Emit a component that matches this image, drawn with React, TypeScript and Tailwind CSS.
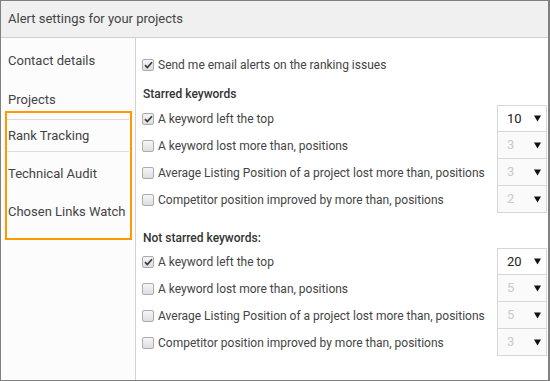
import React from "react";

type Rule = {
  label: string;
  checked: boolean;
  value: string;
};

const starred: Rule[] = [
  { label: "A keyword left the top", checked: true, value: "10" },
  { label: "A keyword lost more than, positions", checked: false, value: "3" },
  { label: "Average Listing Position of a project lost more than, positions", checked: false, value: "3" },
  { label: "Competitor position improved by more than, positions", checked: false, value: "2" }
];

const notStarred: Rule[] = [
  { label: "A keyword left the top", checked: true, value: "20" },
  { label: "A keyword lost more than, positions", checked: false, value: "5" },
  { label: "Average Listing Position of a project lost more than, positions", checked: false, value: "5" },
  { label: "Competitor position improved by more than, positions", checked: false, value: "3" }
];

function Checkbox({ checked }: { checked: boolean }) {
  return (
    <span className="flex h-[12px] w-[12px] shrink-0 items-center justify-center rounded-[2px] border border-[#ababab] bg-gradient-to-b from-[#f6f6f6] to-[#dedede]">
      {checked && (
        <svg width="9" height="8" viewBox="0 0 9 8">
          <path d="M1 4.2 L3.3 6.5 L8 1.2" fill="none" stroke="#3a3a3a" strokeWidth="1.7" />
        </svg>
      )}
    </span>
  );
}

function RuleRow({ rule, first }: { rule: Rule; first: boolean }) {
  const active = rule.checked;
  return (
    <div className="flex h-[27px] items-center">
      <div className="flex min-w-0 flex-1 items-center gap-[4px] pl-[6px]">
        <Checkbox checked={rule.checked} />
        <span className="whitespace-nowrap text-[12px] text-[#444]">{rule.label}</span>
      </div>
      <div
        className={`flex h-full w-[50px] shrink-0 items-center justify-between border-x border-b border-[#d6d6d6] pl-[9px] pr-[5px] ${
          first ? "border-t" : ""
        } ${active ? "bg-white text-[#222]" : "bg-[#fafafa] text-[#cacaca]"}`}
      >
        <span className="text-[13px]">{rule.value}</span>
        <svg width="7" height="7" viewBox="0 0 7 7">
          <path d="M0 0.5 H7 L3.5 6.5 Z" fill="#111" />
        </svg>
      </div>
    </div>
  );
}

function RuleGroup({ rules }: { rules: Rule[] }) {
  return (
    <div className="flex flex-col">
      {rules.map((rule, i) => (
        <RuleRow key={rule.label + i} rule={rule} first={i === 0} />
      ))}
    </div>
  );
}

export default function App() {
  return (
    <div className="flex h-[381px] w-[550px] flex-col border border-r-2 border-[#808080] bg-white font-['Roboto',sans-serif] text-[#444]">
      <div className="flex h-[37px] shrink-0 items-center border-b border-[#cfcfcf] bg-[#f0f0f0] px-[7px] text-[13px] text-[#444]">
        Alert settings for your projects
      </div>

      <div className="flex flex-1">
        <aside className="relative w-[135px] shrink-0 border-r border-[#d2d2d2] bg-[#fcfcfc] pt-[4px] text-[13px] text-[#444]">
          <div className="flex h-[38px] items-center px-[7px]">Contact details</div>
          <div className="flex h-[39px] items-center px-[7px]">Projects</div>
          <div className="mx-[6px] flex h-[33px] items-center border-y border-[#dcdcdc] px-[1px]">Rank Tracking</div>
          <div className="flex h-[44px] items-center px-[7px]">Technical Audit</div>
          <div className="flex h-[32px] items-center px-[7px]">Chosen Links Watch</div>

          <div className="absolute left-[4px] top-[73px] h-[129px] w-[127px] border-2 border-[#ff9900]" />
        </aside>

        <main className="flex-1 pr-[1px] pt-[17px]">
          <div className="flex h-[20px] items-center gap-[4px] pl-[6px]">
            <Checkbox checked />
            <span className="text-[12px] text-[#444]">Send me email alerts on the ranking issues</span>
          </div>

          <div className="mt-[9px] flex h-[20px] items-center pl-[7px] text-[12px] font-medium text-[#333]">
            Starred keywords
          </div>
          <div className="mt-[1px]">
            <RuleGroup rules={starred} />
          </div>

          <div className="mt-[15px] flex h-[20px] items-center pl-[7px] text-[12px] font-medium text-[#333]">
            Not starred keywords:
          </div>
          <RuleGroup rules={notStarred} />
        </main>
      </div>
    </div>
  );
}
